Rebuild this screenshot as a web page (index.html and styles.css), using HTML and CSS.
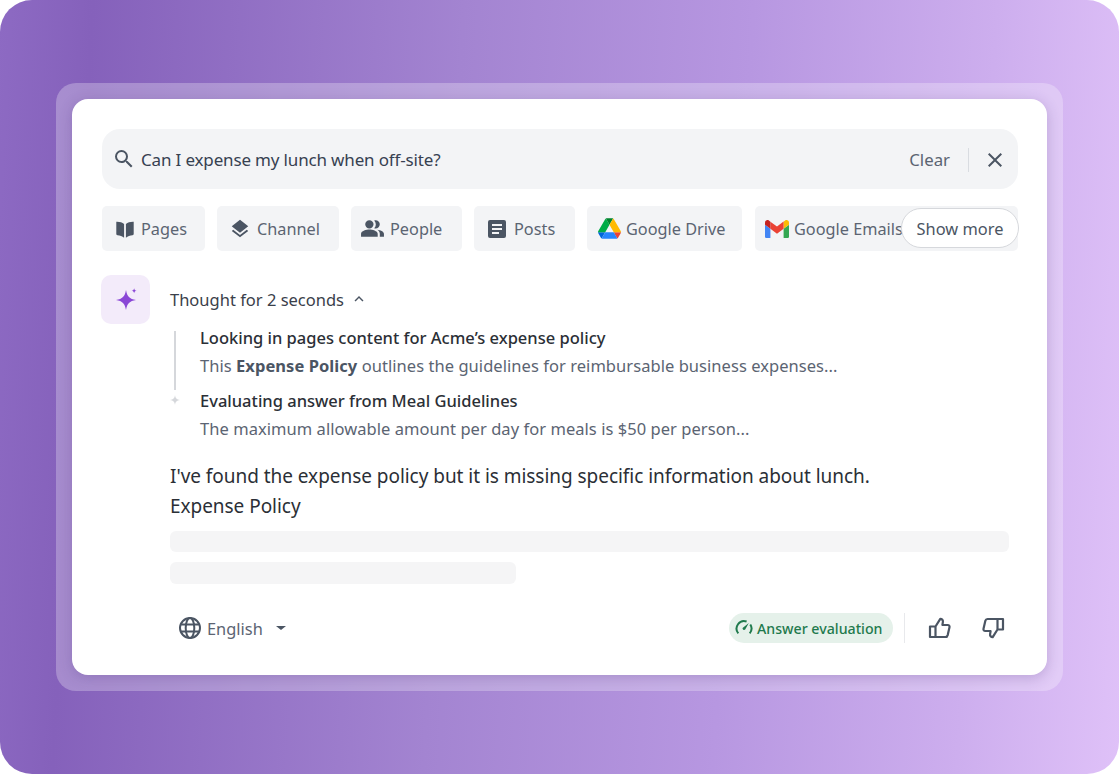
FILE: index.html
```html
<!DOCTYPE html>
<html lang="en">
<head>
<meta charset="utf-8">
<title>Answer</title>
<link rel="stylesheet" href="styles.css">
</head>
<body>
<main class="frame">
  <div class="glass">
    <section class="card">
      <div class="search">
        <svg class="ic-search" viewBox="0 0 24 24"><path d="M15.500 14h-.79l-.28-.27A6.470 6.470 0 0 0 16 9.500 6.500 6.500 0 1 0 9.500 16c1.610 0 3.090-.59 4.230-1.570l.27.28v.79l5 4.990L20.490 19l-4.990-5zm-6 0C7.010 14 5 11.990 5 9.500S7.010 5 9.500 5 14 7.010 14 9.500 11.990 14 9.500 14z"/></svg>
        <span class="query">Can I expense my lunch when off-site?</span>
        <span class="clear">Clear</span>
        <span class="vr"></span>
        <svg class="ic-close" viewBox="0 0 24 24"><path d="M19 6.410 17.590 5 12 10.590 6.410 5 5 6.410 10.590 12 5 17.590 6.410 19 12 13.410 17.590 19 19 17.590 13.410 12z"/></svg>
      </div>
      <div class="chips">
        <span class="chip chip-pages"><svg viewBox="0 0 24 24"><path d="M11 6.500C9 4.800 6 3.800 2.500 4v13.500c0 .8.500 1.300 1.300 1.300 2.700.1 5.200 1 7.200 2.700zM13 6.500v15c2-1.700 4.500-2.600 7.200-2.700.8 0 1.300-.5 1.300-1.300V4C18 3.800 15 4.800 13 6.500z"/></svg>Pages</span>
        <span class="chip chip-channel"><svg viewBox="0 0 24 24"><path d="m12 18.540-7.370-5.730L3 14.070l9 7 9-7-1.630-1.270zM12 16l9-7-9-7-9 7 1.630 1.270z"/></svg>Channel</span>
        <span class="chip chip-people"><svg viewBox="0 0 24 24"><path d="M16.670 13.130C18.040 14.060 19 15.320 19 17v3h4v-3c0-2.180-3.570-3.470-6.330-3.870zM9 12a4 4 0 1 0 0-8 4 4 0 0 0 0 8zm6 0a4 4 0 0 0 0-8c-.47 0-.91.100-1.330.24a5.980 5.980 0 0 1 0 7.520c.42.140.86.240 1.330.240zM9 13c-2.670 0-8 1.340-8 4v3h16v-3c0-2.660-5.330-4-8-4z"/></svg>People</span>
        <span class="chip chip-posts"><svg viewBox="0 0 24 24"><path d="M19 3H5a2 2 0 0 0-2 2v14a2 2 0 0 0 2 2h14a2 2 0 0 0 2-2V5a2 2 0 0 0-2-2zm-5 14H7v-2h7v2zm3-4H7v-2h10v2zm0-4H7V7h10v2z"/></svg>Posts</span>
        <span class="chip chip-drive"><svg class="logo-drive" viewBox="0 0 87.300 78"><path d="m6.600 66.850 3.850 6.650c.8 1.400 1.950 2.500 3.300 3.300L27.500 53H0c0 1.550.4 3.100 1.200 4.500z" fill="#0066da"/><path d="M43.650 25 29.900 1.200c-1.350.8-2.500 1.900-3.300 3.300l-25.400 44A9.060 9.060 0 0 0 0 53h27.500z" fill="#00ac47"/><path d="M73.550 76.800c1.350-.8 2.500-1.900 3.300-3.300l1.600-2.750L86.100 57.500c.8-1.400 1.200-2.950 1.200-4.500H59.800l5.850 11.500z" fill="#ea4335"/><path d="M43.650 25 57.400 1.200C56.050.4 54.500 0 52.900 0H34.400c-1.600 0-3.150.45-4.500 1.200z" fill="#00832d"/><path d="M59.800 53H27.500L13.750 76.800c1.350.8 2.900 1.200 4.500 1.200h50.800c1.600 0 3.150-.45 4.500-1.200z" fill="#2684fc"/><path d="m73.400 26.500-12.700-22c-.8-1.400-1.950-2.500-3.300-3.300L43.650 25 59.800 53h27.450c0-1.550-.4-3.100-1.200-4.500z" fill="#ffba00"/></svg>Google Drive</span>
        <span class="chip chip-mail"><svg class="logo-mail" viewBox="0 0 24 18"><path d="M1.600 18h3.800V8.800L0 4.700v11.700C0 17.300.7 18 1.600 18z" fill="#4285f4"/><path d="M18.600 18h3.800c.9 0 1.600-.7 1.600-1.600V4.700l-5.400 4.100z" fill="#34a853"/><path d="M18.600 1.700v7.100L24 4.700V2.500c0-2-2.300-3.200-3.900-2z" fill="#fbbc04"/><path d="M5.400 8.800V1.700L12 6.600l6.600-5v7.200L12 13.700z" fill="#ea4335"/><path d="M0 2.500v2.200l5.400 4.100V1.700L3.900.5C2.300-.7 0 .5 0 2.500z" fill="#c5221f"/></svg>Google Emails</span>
        <span class="more">Show more</span>
      </div>
      <div class="answer">
        <div class="spark"><svg viewBox="-1.500 -0.500 24 24"><path d="M10.500 3.500c.9 5.200 2.800 7.100 8 8-5.200.9-7.100 2.800-8 8-.9-5.200-2.800-7.100-8-8 5.200-.9 7.100-2.800 8-8z" fill="#8a46d6"/><path d="M17 2c.25 1.400.7 1.850 2 2-1.300.25-1.750.7-2 2-.25-1.300-.7-1.750-2-2 1.300-.15 1.750-.6 2-2z" fill="#8a46d6"/></svg></div>
        <div class="body">
          <div class="thought">Thought for 2 seconds<svg viewBox="0 0 24 24"><path d="M7.410 15.410 12 10.830l4.590 4.580L18 14l-6-6-6 6z"/></svg></div>
          <div class="steps">
            <div class="rail"><i class="rail-line"></i><svg viewBox="0 0 10 10"><path d="M5 0c.4 3.300 1.700 4.600 5 5-3.300.4-4.600 1.700-5 5-.4-3.300-1.700-4.600-5-5 3.300-.4 4.600-1.700 5-5z"/></svg></div>
            <div class="step-list">
              <div class="step"><div class="step-title">Looking in pages content for Acme’s expense policy</div><div class="step-text">This <b>Expense Policy</b> outlines the guidelines for reimbursable business expenses...</div></div>
              <div class="step"><div class="step-title">Evaluating answer from Meal Guidelines</div><div class="step-text">The maximum allowable amount per day for meals is $50 per person...</div></div>
            </div>
          </div>
          <p class="reply">I've found the expense policy but it is missing specific information about lunch.<br>Expense Policy</p>
          <div class="skel skel-a"></div>
          <div class="skel skel-b"></div>
          <div class="foot">
            <svg class="ic-globe" viewBox="0 0 24 24"><circle cx="12" cy="12" r="10"/><ellipse cx="12" cy="12" rx="4.300" ry="10"/><path d="M2.800 8.500h18.400M2.800 15.500h18.400"/></svg>
            <span class="lang">English</span>
            <i class="caret"></i>
            <span class="badge"><svg viewBox="0 0 18 18"><path d="M3.300 14.300A7.500 7.500 0 0 1 11.600 2.500M15.300 5.500a7.500 7.500 0 0 1-.6 8.800"/><path class="fill" d="M13.800 3.900 10.200 10.600a1.600 1.600 0 0 1-2.600-1.600z"/></svg>Answer evaluation</span>
            <span class="vr vr-foot"></span>
            <svg class="ic-thumb" viewBox="0 0 24 24"><path d="M7.500 10.500 12.300 2.800c1.800 0 2.900 1.300 2.600 3.100l-.5 3.100h5.300c1.300 0 2.100 1.100 1.800 2.300l-1.800 7.800c-.3 1.100-1.100 1.900-2.200 1.900H7.500zM7.500 10.500H2v10.500h5.500"/></svg>
            <svg class="ic-thumb ic-down" viewBox="0 0 24 24"><path d="M7.500 10.500 12.300 2.800c1.800 0 2.900 1.300 2.600 3.100l-.5 3.100h5.300c1.300 0 2.100 1.100 1.800 2.300l-1.800 7.800c-.3 1.100-1.100 1.900-2.200 1.900H7.500zM7.500 10.500H2v10.500h5.500"/></svg>
          </div>
        </div>
      </div>
    </section>
  </div>
</main>
</body>
</html>
```
FILE: styles.css
```css
* { box-sizing: border-box; }
html, body { margin: 0; padding: 0; background: #fff; }
body { font-family: "Noto Sans", "Liberation Sans", sans-serif; color: #2b2f36; }
.frame {
  width: 1119px; height: 774px; padding: 83px 56px;
  border-radius: 32px; overflow: hidden;
  background: linear-gradient(93deg, #8d6ac3 0%, #8561bb 8%, #a384d1 40%, #b797e1 65%, #cdaeee 86%, #dfc1f8 100%);
}
.glass {
  height: 608px; padding: 16px; border-radius: 20px;
  background: rgba(255, 255, 255, .27);
}
.card {
  height: 576px; padding: 30px 29px 0 30px; border-radius: 16px;
  background: #fff; box-shadow: 0 3px 14px rgba(70, 40, 120, .24);
}
.search {
  display: flex; align-items: center; height: 60px; padding: 1px 11px 0 10px;
  border-radius: 18px; background: #f3f4f6;
}
.ic-search { width: 24px; height: 24px; fill: #4b5563; flex: none; margin-top: -1px; }
.query { margin-left: 5px; font-size: 17px; letter-spacing: -.16px; color: #374151; flex: 1; }
.clear { font-size: 16.800px; color: #5b6472; }
.vr { width: 1px; height: 24px; background: #d9dce1; margin: 0 14px 0 18px; flex: none; }
.ic-close { width: 24px; height: 24px; fill: #4b5563; flex: none; }
.chips { position: relative; display: flex; gap: 12px; margin-top: 17px; height: 45px; }
.chip {
  display: flex; align-items: center; gap: 6px; height: 45px; padding: 0 17px 0 12px;
  border-radius: 5px; background: #f3f4f6; font-size: 16.300px; color: #5b6472; white-space: nowrap; flex: none;
}
.chip svg { width: 22px; height: 22px; fill: #4b5563; flex: none; }
.chip-pages { width: 103px; gap: 5px; }
.chip-channel { width: 122px; }
.chip-people { width: 111px; padding-left: 9px; gap: 5px; }
.chip-people svg { width: 25px; height: 25px; }
.chip-posts { width: 101px; padding-left: 11px; gap: 5px; }
.chip-posts svg { width: 24px; height: 24px; }
.chip-drive { width: 155px; padding-left: 11px; gap: 5px; }
.chip-mail { width: 263px; margin-left: 1px; overflow: hidden; gap: 5px; padding-left: 10px; }
.chip .logo-drive { width: 23px; height: 21px; }
.chip .logo-mail { width: 24px; height: 18px; }
.more {
  position: absolute; right: -1px; top: 2px; width: 118px; height: 40px;
  display: flex; align-items: center; justify-content: center;
  border: 1px solid #d6d8dc; border-radius: 20px; background: #fff; font-size: 16.400px; color: #4b5563;
}
.answer { display: flex; margin-top: 24px; margin-left: -1px; }
.spark {
  width: 49px; height: 49px; border-radius: 10px; background: #f3ebfa; flex: none;
  display: flex; align-items: center; justify-content: center;
}
.spark svg { width: 30px; height: 30px; }
.body { margin-left: 20px; width: 839px; }
.thought { display: flex; align-items: center; height: 22px; margin-top: 13px; font-size: 16.500px; color: #3a404a; }
.thought svg { width: 18px; height: 18px; fill: #4b5563; margin-left: 6px; }
.steps { display: flex; margin-top: 16px; }
.rail { width: 30px; display: flex; flex-direction: column; align-items: flex-start; padding-left: 4px; flex: none; }
.rail-line { display: block; width: 2px; height: 59px; background: #d5d7db; margin-top: 5px; }
.rail svg { width: 10px; height: 10px; fill: #d5d7db; margin: 5px 0 0 -4px; }
.step-title { font-size: 16.500px; line-height: 24px; font-weight: 500; color: #2b2f36; }
.step-text { font-size: 16.500px; letter-spacing: .05px; line-height: 24px; margin-top: 4px; color: #5b6472; }
.step-text b { font-weight: 700; color: #4b5563; }
.step + .step { margin-top: 11px; }
.reply { margin: 20px 0 0; font-size: 19px; letter-spacing: -.04px; line-height: 30px; color: #2b2f36; }
.skel { height: 21px; border-radius: 6px; background: #f5f5f6; }
.skel-a { margin-top: 10px; }
.skel-b { width: 346px; height: 22px; margin-top: 10px; }
.foot { display: flex; align-items: center; height: 30px; margin-top: 29px; }
.ic-globe { width: 24px; height: 24px; fill: none; stroke: #4b5563; stroke-width: 2; margin-left: 8px; flex: none; }
.lang { margin-left: 5px; font-size: 16.400px; color: #5b6472; }
.caret { width: 0; height: 0; margin-left: 13px; border: 5px solid transparent; border-top: 4px solid #4b5563; border-bottom: 0; }
.badge {
  display: flex; align-items: center; gap: 4px; height: 30px; width: 164px; margin-left: auto; padding-left: 6px;
  border-radius: 15px; background: #e5f1ea; font-size: 14.200px; font-weight: 500; color: #1f7a4d; white-space: nowrap;
}
.badge svg { width: 18px; height: 18px; fill: none; stroke: #1f7a4d; stroke-width: 2; flex: none; }
.badge .fill { fill: #1f7a4d; stroke: none; }
.vr-foot { margin: 0 23px 0 11px; height: 30px; background: #e8e9ec; }
.ic-thumb { width: 24px; height: 24px; fill: none; stroke: #4b5563; stroke-width: 2.200; stroke-linejoin: round; flex: none; }
.ic-down { margin: 0 4px 0 29px; transform: rotate(180deg); }
```
